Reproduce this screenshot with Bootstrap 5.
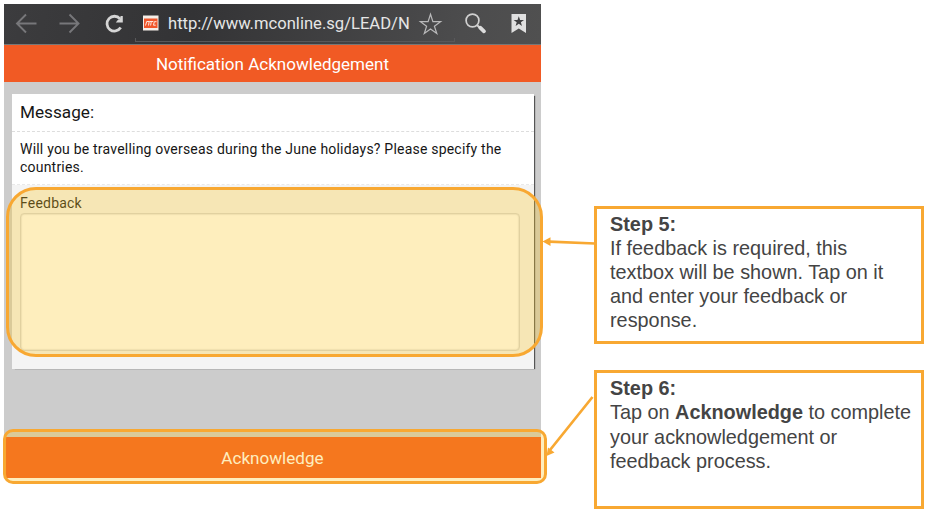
<!DOCTYPE html>
<html lang="en">
<head>
<meta charset="utf-8">
<meta name="viewport" content="width=device-width, initial-scale=1">
<title>Notification Acknowledgement</title>
<link href="https://cdn.jsdelivr.net/npm/bootstrap@5.3.0/dist/css/bootstrap.min.css" rel="stylesheet">
<style>
body{background:#fff;font-family:"Liberation Sans",Arial,sans-serif;overflow:hidden}
.guide{width:930px;height:514px;padding:4px 6px 0 4px}
.phone{width:537px;height:474px;background:#ccc;font-family:Roboto,sans-serif}
.browser-bar{height:41px;background:linear-gradient(100deg,#3c3c3e,#333335 35%,#4c4c4d 85%,#505050);border-bottom:1px solid #777;color:#e6e6e6}
.browser-bar svg{display:block;flex:none}
.address{width:320px;height:38px;margin-left:11px;position:relative}
.address::after{content:"";position:absolute;left:0;right:0;bottom:0;height:4px;border:solid #58585a;border-width:0 1px 1px}
.url{font-size:16.6px;width:246px;margin-left:9px;white-space:nowrap;line-height:39px}
.app-title{height:37px;background:#f15a24;color:#fff;font-size:17.05px;line-height:38px}
.message-panel{width:522px;height:275px;margin:12px 0 0 8px;background:#f4f4f4;color:#161616;box-shadow:2px 1px 1px -1px #555}
.panel-head{height:38px;background:#fff;border-bottom:1px dashed #ddd;padding-left:8px;font-size:17.2px;line-height:37px}
.panel-text{height:53px;background:#fff;border-bottom:1px dashed #e9e9e9;padding:8px 8px 0;font-size:14px;line-height:18px;letter-spacing:.21px}
.panel-field{padding:9px 14px 0 8px}
.panel-field label{font-size:14px;line-height:19px;letter-spacing:.2px}
.panel-field textarea{height:138px;resize:none;border:1px solid #d6d6d6;border-radius:4px;box-shadow:inset 0 0 2px #bbb}
.ack{height:41px;background:#f2551c;color:#fff;font-size:17.1px;line-height:42px;border:0;padding:0}
.steps{margin-left:53px;width:330px;padding-top:202px}
.step{border:3px solid #f8a832;color:#444;font-size:19.85px;padding:3px 8px 0 13px;white-space:nowrap}
.step-five{height:138px;line-height:23.9px;padding-top:4px}
.step-six{height:139px;margin-top:26px;line-height:24.3px}
.marker{position:absolute;border:3px solid #f8a832;background:rgba(252,198,35,.3);pointer-events:none}
.marker-feedback{left:6px;top:187px;width:537px;height:170px;border-radius:30px}
.marker-ack{left:3px;top:429px;width:544px;height:55px;border-radius:10px}
.arrows{position:absolute;left:0;top:0;pointer-events:none}
</style>
<script src="https://cdn.jsdelivr.net/npm/bootstrap@5.3.0/dist/js/bootstrap.bundle.min.js"></script>
</head>
<body>
<main class="guide position-relative d-flex align-items-start">
  <section class="phone d-flex flex-column flex-shrink-0">
    <div class="browser-bar d-flex flex-shrink-0">
      <svg width="120" height="38" viewBox="0 0 120 38" fill="none" stroke="#77777a" stroke-width="1.9">
        <path d="M22 10.500 13 19.500l9 9M13.500 19.500h19"/>
        <path d="M65.500 10.500l9 9-9 9M74 19.500H55.500"/>
        <path d="M116 14.800A7.400 7.400 0 1 0 116.700 23.600" stroke="#d5d5d5" stroke-width="2.800"/>
        <path d="M118.800 12v6.500h-7l2-2.500 2.200-1 .6-3z" fill="#d5d5d5" stroke="none"/>
      </svg>
      <div class="address d-flex">
        <svg width="24" height="38" viewBox="0 0 24 38">
          <rect x="8" y="11.500" width="15.500" height="15" fill="#f5eee8"/>
          <rect x="9" y="14.500" width="13.500" height="9.500" fill="#f0562b"/>
          <path d="M10.500 21.500l1.200-4h2.500l-.7 4M14.300 17.500h4M16.300 17.500l-.7 4M21.500 17.700h-2.200l-.8 3.500h2.200" fill="none" stroke="#ffe9df" stroke-width="1"/>
        </svg>
        <span class="url">http://www.mconline.sg/LEAD/N</span>
        <svg width="32" height="38" viewBox="0 0 32 38" fill="none" stroke="#b9b9ba" stroke-width="1.200">
          <path d="M16.500 10.300l2.400 7.400h7.700l-6.200 4.500 2.400 7.300-6.300-4.500-6.200 4.500 2.300-7.300-6.200-4.500h7.700z"/>
        </svg>
      </div>
      <svg width="86" height="38" viewBox="0 0 86 38">
        <circle cx="17.500" cy="16.500" r="6.400" fill="none" stroke="#d0d0d0" stroke-width="1.700"/>
        <path d="M22 21l3 3" stroke="#d0d0d0" stroke-width="2"/>
        <path d="M25.200 23.700l3.800 3.600" stroke="#ddd" stroke-width="3.800" stroke-linecap="round"/>
        <path d="M56.500 10h14.500v19l-7.200-4.500L56.500 29z" fill="#e0e0e0"/>
        <path d="M63.800 12.300l1.300 3.700h3.900l-3.100 2.300 1.100 3.700-3.200-2.200-3.200 2.200 1.100-3.700-3.100-2.300h3.900z" fill="#414143"/>
      </svg>
    </div>
    <div class="app-title text-center flex-shrink-0">Notification Acknowledgement</div>
    <div class="message-panel flex-shrink-0">
      <div class="panel-head">Message:</div>
      <div class="panel-text">Will you be travelling overseas during the June holidays? Please specify the<br>countries.</div>
      <div class="panel-field">
        <label class="d-block" for="feedback">Feedback</label>
        <textarea class="d-block w-100 bg-white" id="feedback"></textarea>
      </div>
    </div>
    <button class="ack w-100 mt-auto" type="button">Acknowledge</button>
  </section>
  <section class="steps flex-shrink-0">
    <div class="step step-five"><strong>Step 5:</strong><br>If feedback is required, this<br>textbox will be shown. Tap on it<br>and enter your feedback or<br>response.</div>
    <div class="step step-six"><strong>Step 6:</strong><br>Tap on <strong>Acknowledge</strong> to complete<br>your acknowledgement or<br>feedback process.</div>
  </section>
  <div class="marker marker-feedback"></div>
  <div class="marker marker-ack"></div>
  <svg class="arrows" width="930" height="514" viewBox="0 0 930 514" stroke="#f8a832" stroke-width="2.700" fill="#f8a832">
    <path d="M595 243.500 549 241.600M592.500 397 550 450" />
    <path d="M542.500 241.500l8-4.200v8.600zM546.500 456l1.500-8.500 6.500 5z" stroke="none"/>
  </svg>
</main>
</body>
</html>
